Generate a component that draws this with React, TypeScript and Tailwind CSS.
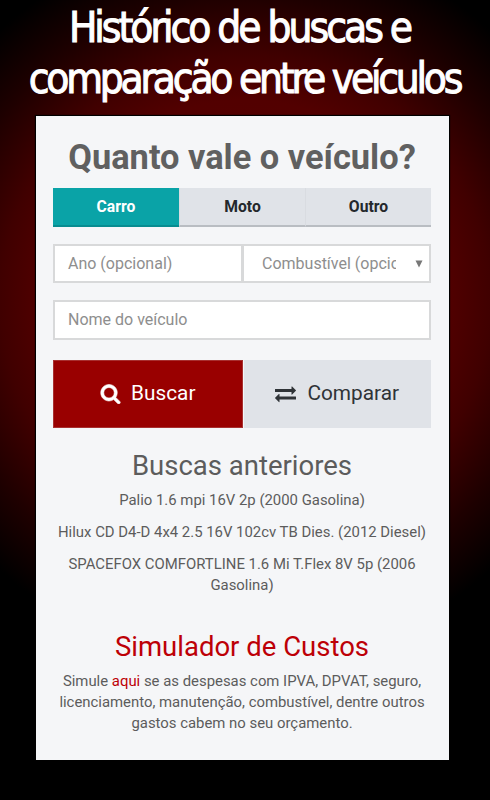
const abas = ['Carro', 'Moto', 'Outro'];

const historico = [
  'Palio 1.6 mpi 16V 2p (2000 Gasolina)',
  'Hilux CD D4-D 4x4 2.5 16V 102cv TB Dies. (2012 Diesel)',
  'SPACEFOX COMFORTLINE 1.6 Mi T.Flex 8V 5p (2006 Gasolina)',
];

const IconeBusca = () => (
  <svg viewBox="0 0 1792 1792" className="size-[21px]" fill="currentColor" stroke="currentColor" strokeWidth="50">
    <path d="M1216 832q0-185-131.5-316.5t-316.5-131.5-316.5 131.5-131.5 316.5 131.5 316.5 316.5 131.5 316.5-131.5 131.5-316.5zm512 832q0 52-38 90t-90 38q-54 0-90-38l-343-342q-179 124-399 124-143 0-273.5-55.5t-225-150-150-225-55.5-273.5 55.5-273.5 150-225 225-150 273.5-55.5 273.5 55.5 225 150 150 225 55.5 273.5q0 220-124 399l343 343q37 37 37 90z" />
  </svg>
);

const IconeTroca = () => (
  <svg viewBox="0 0 1792 1792" className="size-[21px]" fill="currentColor">
    <path d="M1792 1184v192q0 13-9.5 22.5t-22.5 9.5h-1376v192q0 13-9.5 22.5t-22.5 9.5q-12 0-24-10l-319-320q-9-9-9-22 0-14 9-23l320-320q9-9 23-9 13 0 22.5 9.5t9.5 22.5v192h1376q13 0 22.5 9.5t9.5 22.5zm0-544q0 14-9 23l-320 320q-9 9-23 9-13 0-22.5-9.5t-9.5-22.5v-192h-1376q-13 0-22.5-9.5t-9.5-22.5v-192q0-13 9.5-22.5t22.5-9.5h1376v-192q0-14 9-23t23-9q12 0 24 10l319 319q9 9 9 23z" />
  </svg>
);

export default function App() {
  return (
    <div className="h-[800px] w-[490px] overflow-hidden bg-black bg-[radial-gradient(circle_at_245px_300px,#5a0000_0px,#520000_200px,#400000_245px,#1e0000_305px,#000000_365px)] font-['Roboto',sans-serif]">
      <h1 className="h-[116px] pt-[2px] text-center font-['DejaVu_Sans_Condensed','DejaVu_Sans',sans-serif] text-[42px] leading-[51px] tracking-[-3.2px] whitespace-nowrap text-white [-webkit-text-stroke:1px_white]">
        <span className="block pr-[11px] tracking-[-3px]">Histórico de buscas e</span>
        <span className="block pr-px">comparação entre veículos</span>
      </h1>

      <main className="ml-[36px] h-[644px] w-[412.5px] bg-[#f5f6f8] pt-[22px] pr-[17.5px] pl-[17px] text-center text-[#5c5c5c] shadow-[0_0_1px_1px_#000000]">
        <h2 className="text-[34.4px] leading-[38px] font-bold whitespace-nowrap text-[#606060]">Quanto vale o veículo?</h2>

        <div className="mt-[12px] grid h-[39px] grid-cols-3">
          {abas.map((aba, i) => (
            <button
              key={aba}
              className={
                i === 0
                  ? 'border-b-2 border-[#078c90] bg-[#0aa3a7] pt-px text-[15.7px] font-bold text-white'
                  : 'border-b-2 border-l border-b-[#b9bdc2] border-l-[#d9dce1] bg-[#e0e3e8] pt-px text-[15.7px] font-bold text-[#24282c]'
              }
            >
              {aba}
            </button>
          ))}
        </div>

        <div className="mt-[17px] flex h-[39px] text-left text-base text-[#8e8e8e]">
          <div className="flex w-[190px] items-center border-2 border-[#d8d9da] bg-white pl-[13px]">Ano (opcional)</div>
          <div className="-ml-px flex flex-1 items-center border-2 border-[#d8d9da] bg-white pr-[6px] pl-[18px]">
            <span className="w-[134px] overflow-hidden whitespace-nowrap">Combustível (opcional)</span>
            <svg viewBox="0 0 8 8" className="ml-auto size-[8px]" fill="#777777">
              <path d="M0.5 0.5h7L4 7.5z" />
            </svg>
          </div>
        </div>

        <div className="mt-[17px] flex h-[40px] items-center border-2 border-[#d8d9da] bg-white pl-[13px] text-base text-[#8e8e8e]">
          Nome do veículo
        </div>

        <div className="mt-[20px] flex h-[68px] pb-[0.5px] text-[20.8px]">
          <button className="flex w-[189.5px] items-center justify-center gap-[10px] border border-[#a83030] bg-[#990000] text-white">
            <IconeBusca />
            Buscar
          </button>
          <button className="ml-px flex flex-1 items-center justify-center gap-[11px] bg-[#e0e3e8] text-[#2f3337]">
            <IconeTroca />
            Comparar
          </button>
        </div>

        <h3 className="mt-[21px] text-[27.5px] leading-[34px]">Buscas anteriores</h3>
        <div className="mt-[7px] space-y-[11px] text-[14.9px] leading-[21px]">
          {historico.map((item) => (
            <p key={item}>{item}</p>
          ))}
        </div>

        <h3 className="mt-[34px] text-[27.5px] leading-[34px] text-[#bd0007]">Simulador de Custos</h3>
        <p className="mt-[7px] text-[14.9px] leading-[21px]">
          Simule <a className="text-[#bd0007]">aqui</a> se as despesas com IPVA, DPVAT, seguro, licenciamento, manutenção, combustível, dentre outros gastos cabem no seu orçamento.
        </p>
      </main>
    </div>
  );
}
